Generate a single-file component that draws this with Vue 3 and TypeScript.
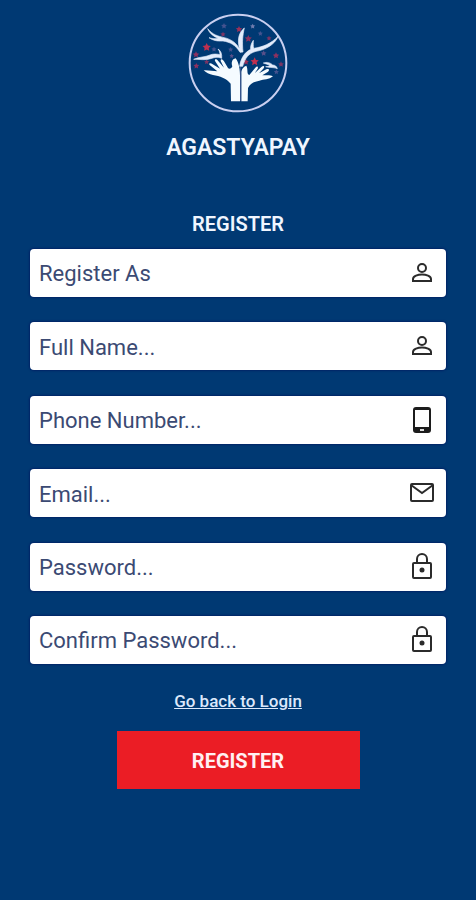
<script setup lang="ts">
import { reactive } from 'vue'

type FieldKey = 'role' | 'name' | 'phone' | 'email' | 'password' | 'confirm'
type IconName = 'person' | 'phone' | 'mail' | 'lock'

interface Field {
  key: FieldKey
  label: string
  type: string
  icon: IconName
}

const fields: Field[] = [
  { key: 'role', label: 'Register As', type: 'select', icon: 'person' },
  { key: 'name', label: 'Full Name...', type: 'text', icon: 'person' },
  { key: 'phone', label: 'Phone Number...', type: 'tel', icon: 'phone' },
  { key: 'email', label: 'Email...', type: 'email', icon: 'mail' },
  { key: 'password', label: 'Password...', type: 'password', icon: 'lock' },
  { key: 'confirm', label: 'Confirm Password...', type: 'password', icon: 'lock' },
]

const form = reactive<Record<FieldKey, string>>({
  role: '',
  name: '',
  phone: '',
  email: '',
  password: '',
  confirm: '',
})

// Stars scattered between the branches: x, y, radius, fill
const stars: [number, number, number, string][] = [
  [79, 127, 13, '#c0304f'],
  [223, 170, 13, '#c0304f'],
  [204, 101, 11, '#8d3160'],
  [176, 73, 10, '#9d3058'],
  [131, 63, 9, '#45538f'],
  [47, 149, 10, '#8d3160'],
  [48, 183, 9, '#8d3160'],
  [79, 171, 8, '#7c3464'],
  [287, 152, 10, '#8d3160'],
  [302, 178, 9, '#7c3464'],
  [250, 145, 9, '#59508a'],
  [217, 64, 8, '#6f7cae'],
  [240, 86, 8, '#45538f'],
  [128, 88, 8, '#7c3464'],
  [151, 134, 8, '#45538f'],
  [101, 133, 8, '#45538f'],
  [266, 100, 8, '#7c3464'],
  [197, 171, 9, '#9d3058'],
  [154, 153, 7, '#59508a'],
  [288, 201, 8, '#45538f'],
]

function starPoints(x: number, y: number, r: number): string {
  return Array.from({ length: 10 }, (_, i) => {
    const radius = i % 2 ? r * 0.5 : r
    const angle = (Math.PI / 5) * i - Math.PI / 2
    return `${(x + radius * Math.cos(angle)).toFixed(1)},${(y + radius * Math.sin(angle)).toFixed(1)}`
  }).join(' ')
}
</script>

<template>
  <main class="page">
    <header class="brand">
      <svg class="logo" viewBox="23 24 300 300" aria-hidden="true">
        <circle cx="173" cy="174" r="145" fill="none" stroke="#c9cff0" stroke-width="6" />
        <polygon
          v-for="([x, y, r, fill], i) in stars"
          :key="i"
          :points="starPoints(x, y, r)"
          :fill="fill"
        />
        <g fill="#e3ecfb" stroke="#e3ecfb" stroke-width="2" stroke-linejoin="round">
          <path d="M82 71 C98 90 112 93 132 98 C153 103 168 114 178 132 C171 107 173 85 192 69 C187 91 185 110 188 141 L179 142 C166 120 149 111 128 108 C108 109 98 106 86 98 C96 101 105 102 114 100 C98 94 87 84 82 71Z" />
          <path d="M178 184 C181 160 193 142 211 133 C210 123 213 115 219 106 C219 116 218 123 220 130 C247 126 273 116 294 93 C283 120 255 134 227 139 C204 145 194 160 187 184Z" />
          <path d="M40 163 C57 155 74 157 89 150 C98 146 111 147 119 149 C119 143 117 137 113 132 C122 137 125 147 124 160 C110 154 101 158 91 161 C74 167 57 162 40 163Z" />
          <path d="M249 174 C260 170 270 173 277 180 C284 180 289 184 291 191 C282 187 274 188 265 187 L256 185 C263 185 266 183 269 181 C263 178 257 177 249 174Z" />
        </g>
        <g fill="#f5fbff">
          <path d="M70 196 C84 195 97 198 111 199 L88 180 C84 174 91 173 97 178 L119 191 L104 168 C102 161 108 161 113 167 L131 188 L121 168 C120 160 127 162 131 169 L143 189 C146 193 154 191 156 184 C152 173 155 162 166 160 C176 174 179 194 179 214 L179 289 L152 289 L151 236 C137 219 119 214 98 210 C88 208 76 203 70 196Z" />
          <path d="M183 289 L183 206 C182 196 188 185 198 182 C204 193 198 207 207 210 L225 188 C230 182 235 184 232 191 L223 205 L243 186 C250 180 255 184 249 191 L236 205 L258 193 C266 190 269 195 262 201 L246 211 C258 211 269 209 278 214 C266 224 250 223 237 227 C219 230 209 237 203 249 L202 289Z" />
        </g>
        <path d="M181 186 V288" stroke="#405b91" stroke-width="3" />
      </svg>
      <h1 class="brand-name">AGASTYAPAY</h1>
    </header>

    <form class="form" @submit.prevent>
      <h2 class="title">REGISTER</h2>

      <div class="fields">
        <label v-for="field in fields" :key="field.key" class="field" :for="field.key">
          <select
            v-if="field.type === 'select'"
            :id="field.key"
            v-model="form[field.key]"
            class="control"
            :aria-label="field.label"
          >
            <option value="">{{ field.label }}</option>
          </select>
          <input
            v-else
            :id="field.key"
            v-model="form[field.key]"
            class="control"
            :type="field.type"
            :placeholder="field.label"
            :aria-label="field.label"
          />
          <svg class="icon" viewBox="0 0 28 28" aria-hidden="true">
            <g v-if="field.icon === 'person'" fill="none" stroke="#2b2b2b" stroke-width="2">
              <circle cx="14" cy="9" r="4" />
              <path d="M5 22 V20 C5 17 10 15.500 14 15.500 S23 17 23 20 V22Z" />
            </g>
            <g v-else-if="field.icon === 'phone'">
              <rect x="5" y="1" width="18" height="26" rx="3" fill="#1c1c1c" />
              <rect x="7" y="4" width="14" height="17" fill="#fff" />
              <rect x="12" y="23" width="4" height="2" fill="#ddd" />
            </g>
            <g v-else-if="field.icon === 'mail'" fill="none" stroke="#2b2b2b" stroke-width="2">
              <rect x="3" y="5" width="22" height="17" rx="1" />
              <path d="M3 6 L14 14 L25 6" />
            </g>
            <g v-else fill="none" stroke="#2b2b2b" stroke-width="2">
              <rect x="5" y="10" width="18" height="15" rx="1" />
              <path d="M9 10 V6 A5 5 0 0 1 19 6 V10" />
              <circle cx="14" cy="17" r="2.500" fill="#2b2b2b" stroke="none" />
            </g>
          </svg>
        </label>
      </div>

      <a class="back" href="#login">Go back to Login</a>
      <button class="submit" type="submit">REGISTER</button>
    </form>
  </main>
</template>

<style>
body {
  margin: 0;
  background: #003973;
}
</style>

<style scoped>
.page {
  box-sizing: border-box;
  min-height: 100vh;
  padding: 13px 30px 40px;
  background: #003973;
  color: #f0f6ff;
  font-family: Roboto, "Liberation Sans", sans-serif;
}

.brand,
.form {
  display: flex;
  flex-direction: column;
  align-items: center;
}

.logo {
  width: 100px;
  height: 100px;
}

.brand-name {
  margin: 20px 0 0;
  font-size: 23px;
  font-weight: 600;
  line-height: 30px;
}

.form {
  margin-top: 49px;
}

.title {
  margin: 0;
  font-size: 20px;
  font-weight: 600;
  line-height: 24px;
}

.fields {
  display: flex;
  flex-direction: column;
  justify-content: space-between;
  align-self: stretch;
  min-height: 415px;
  margin-top: 13px;
}

.field {
  display: flex;
  align-items: center;
  height: 48px;
  padding-right: 10px;
  border-radius: 4px;
  background: #fff;
  box-shadow: 0 0 2px 1px #002266;
}

.control {
  box-sizing: border-box;
  flex: 1;
  min-width: 0;
  height: 100%;
  margin: 0;
  padding: 2px 9px 0;
  border: 0;
  border-radius: 4px;
  outline: 0;
  appearance: none;
  background: transparent;
  color: #3b4a73;
  font: 400 22px/28px Roboto, "Liberation Sans", sans-serif;
}

.control::placeholder {
  color: #3b4a73;
  opacity: 1;
}

.icon {
  flex: none;
  width: 28px;
  height: 28px;
}

.back {
  margin-top: 27px;
  color: #dce8fb;
  font-size: 17px;
  font-weight: 500;
  line-height: 20px;
  text-decoration: underline;
}

.submit {
  width: 243px;
  max-width: 100%;
  height: 58px;
  margin-top: 20px;
  padding: 2px 0 0;
  border: 0;
  background: #eb1d25;
  color: #fff0f2;
  font: 700 20px/24px Roboto, "Liberation Sans", sans-serif;
}
</style>
